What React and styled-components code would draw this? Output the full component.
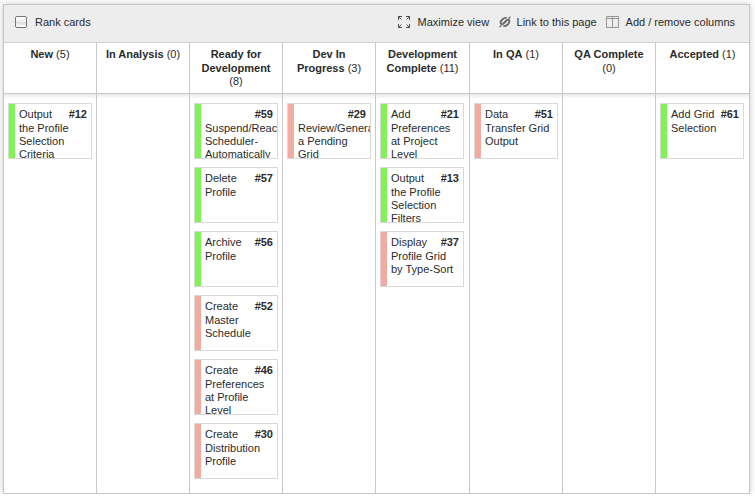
import React from "react";
import styled, { createGlobalStyle } from "styled-components";

const GlobalStyle = createGlobalStyle`
  * { box-sizing: border-box; }
  body {
    margin: 0;
    background: #fff;
    color: #2b2b2b;
    font: 11px/14px "Liberation Sans", Arial, sans-serif;
    overflow: hidden;
  }
`;

const Board = styled.main`
  display: flex;
  flex-direction: column;
  width: 747px;
  height: 490px;
  margin: 4px 0 0 3px;
  border: 1px solid #c6c6c6;
  background: #fff;
  box-shadow: 0 0 6px rgba(0, 0, 0, 0.22);
`;

const Toolbar = styled.header`
  display: flex;
  justify-content: space-between;
  height: 38px;
  padding: 0 14px 0 11px;
  background: #ededed;
  border-bottom: 1px solid #d0d0d0;
`;

const Actions = styled.div`
  display: flex;
`;

const Action = styled.button`
  display: flex;
  align-items: center;
  gap: ${(p) => p.$gap}px;
  width: ${(p) => (p.$width ? `${p.$width}px` : "auto")};
  padding: 0 0 3px;
  border: 0;
  background: none;
  color: inherit;
  font: inherit;
  white-space: nowrap;
  svg { flex: none; }
`;

const Checkbox = styled.span`
  width: 12px;
  height: 12px;
  border: 1px solid #777;
  border-radius: 2px;
  background: linear-gradient(#fff 0%, #eee 45%, #d9d9d9 50%, #fff 100%);
`;

const Row = styled.div`
  display: grid;
  grid-template-columns: repeat(4, 93px) 94px repeat(3, 93px);
`;

const HeadRow = styled(Row)`
  height: 51px;
  border-bottom: 1px solid #c8c8c8;
`;

const BodyRow = styled(Row)`
  flex: 1;
  background: linear-gradient(#e9e9e9, #fff 5px);
`;

const Heading = styled.div`
  padding: 5px 0 0;
  border-right: 1px solid #c8c8c8;
  text-align: center;
  line-height: 13.5px;
  white-space: pre;
  &:last-child { border-right: 0; }
`;

const Lane = styled.div`
  display: flex;
  flex-direction: column;
  gap: 8px;
  padding: 9px 4px 0;
  border-right: 1px solid #c8c8c8;
  &:last-child { border-right: 0; }
`;

const Card = styled.article`
  flex: none;
  display: flex;
  width: 84px;
  height: 56px;
  border: 1px solid #d9d9d9;
  background: #fff;
  overflow: hidden;
`;

const Stripe = styled.div`
  flex: none;
  width: 6px;
  background: ${(p) => (p.$color === "green" ? "#80f454" : "#f2ab9e")};
`;

const CardText = styled.div`
  flex: 1;
  min-width: 0;
  padding: 4px 0 0 4px;
  line-height: 13px;
`;

const FirstLine = styled.div`
  display: flex;
  justify-content: space-between;
  height: 14px;
  padding-right: 4px;
`;

const Rest = styled.div`
  white-space: pre;
`;

const Maximize = () => (
  <svg width="12" height="12" viewBox="0 0 12 12" fill="none" stroke="#4c4c4c" strokeWidth="1">
    <path d="M.5 4V.5H4M.8.8L3.4 3.4M8 .5H11.5V4M11.2.8L8.6 3.4M.5 8V11.5H4M.8 11.2L3.4 8.6M8 11.5H11.5V8M11.2 11.2L8.6 8.6" />
  </svg>
);

const Link = () => (
  <svg width="12" height="12" viewBox="0 0 12 12" fill="none" stroke="#6a6a6a" strokeWidth="1.9">
    <path d="M7.6 2C4.8 1.4 1.6 4.4 1.6 6.8C1.6 8.4 3.2 8.8 4.4 7.6L7.2 4.8" />
    <path d="M4.4 10C7.2 10.6 10.4 7.6 10.4 5.2C10.4 3.6 8.8 3.2 7.6 4.4L4.8 7.2" />
    <path d="M.6 11.2L2.4 9.4M9.6 2.6L11.4 .8" strokeWidth="1.3" />
  </svg>
);

const Columns = () => (
  <svg width="13" height="12" viewBox="0 0 13 12" fill="none" stroke="#969696">
    <path d="M.5.5H12.5V11.5H.5ZM.5 2.5H12.5M6.5 .5V11.5" />
  </svg>
);

const columns = [
  { lines: ["New"], count: 5, cards: [["green", 12, "Output", "the Profile\nSelection\nCriteria"]] },
  { lines: ["In Analysis"], count: 0, cards: [] },
  {
    lines: ["Ready for", "Development", ""],
    count: 8,
    cards: [
      ["green", 59, "", "Suspend/Reactivate\nScheduler-\nAutomatically"],
      ["green", 57, "Delete", "Profile"],
      ["green", 56, "Archive", "Profile"],
      ["red", 52, "Create", "Master\nSchedule"],
      ["red", 46, "Create", "Preferences\nat Profile\nLevel"],
      ["red", 30, "Create", "Distribution\nProfile"],
    ],
  },
  { lines: ["Dev In", "Progress"], count: 3, cards: [["red", 29, "", "Review/Generate\na Pending\nGrid"]] },
  {
    lines: ["Development", "Complete"],
    count: 11,
    cards: [
      ["green", 21, "Add", "Preferences\nat Project\nLevel"],
      ["green", 13, "Output", "the Profile\nSelection\nFilters"],
      ["red", 37, "Display", "Profile Grid\nby Type-Sort"],
    ],
  },
  { lines: ["In QA"], count: 1, cards: [["red", 51, "Data", "Transfer Grid\nOutput"]] },
  { lines: ["QA Complete", ""], count: 0, cards: [] },
  { lines: ["Accepted"], count: 1, cards: [["green", 61, "Add Grid", "Selection"]] },
];

export default function App() {
  return (
    <>
      <GlobalStyle />
      <Board>
        <Toolbar>
          <Action $gap={8}><Checkbox /><span>Rank cards</span></Action>
          <Actions>
            <Action $gap={8} $width={101}><Maximize /><span>Maximize view</span></Action>
            <Action $gap={6} $width={107}><Link /><span>Link to this page</span></Action>
            <Action $gap={7}><Columns /><span>Add / remove columns</span></Action>
          </Actions>
        </Toolbar>
        <HeadRow>
          {columns.map((c) => {
            const title = c.lines.join("\n");
            return (
              <Heading key={title}>
                <b>{title}</b>{title.endsWith("\n") ? "" : " "}({c.count})
              </Heading>
            );
          })}
        </HeadRow>
        <BodyRow>
          {columns.map((c) => (
            <Lane key={c.lines.join()}>
              {c.cards.map(([color, id, first, rest]) => (
                <Card key={id}>
                  <Stripe $color={color} />
                  <CardText>
                    <FirstLine><span>{first}</span><b>#{id}</b></FirstLine>
                    <Rest>{rest}</Rest>
                  </CardText>
                </Card>
              ))}
            </Lane>
          ))}
        </BodyRow>
      </Board>
    </>
  );
}
